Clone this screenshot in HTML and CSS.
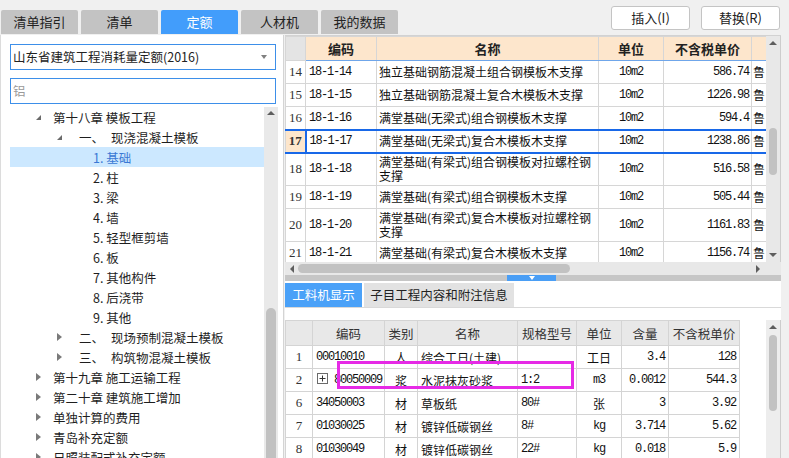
FILE: index.html
```html
<!DOCTYPE html>
<html lang="zh">
<head>
<meta charset="utf-8">
<link rel="stylesheet" href="styles.css">
</head>
<body>
<div class="app">
  <header class="topbar">
    <nav class="tabs">
      <div class="tab">清单指引</div>
      <div class="tab">清单</div>
      <div class="tab active">定额</div>
      <div class="tab">人材机</div>
      <div class="tab">我的数据</div>
    </nav>
    <div class="actions">
      <button class="btn">插入(I)</button>
      <button class="btn">替换(R)</button>
    </div>
  </header>

  <main class="main">
    <aside class="left">
      <div class="select"><span>山东省建筑工程消耗量定额(2016)</span><span class="caret"></span></div>
      <div class="search">铝</div>
      <div class="treewrap">
        <ul class="tree">
          <li class="l0"><span class="tw exp"></span>第十八章 模板工程</li>
          <li class="l1"><span class="tw exp"></span><span class="pre">一、</span>现浇混凝土模板</li>
          <li class="l2 sel">1. 基础</li>
          <li class="l2">2. 柱</li>
          <li class="l2">3. 梁</li>
          <li class="l2">4. 墙</li>
          <li class="l2">5. 轻型框剪墙</li>
          <li class="l2">6. 板</li>
          <li class="l2">7. 其他构件</li>
          <li class="l2">8. 后浇带</li>
          <li class="l2">9. 其他</li>
          <li class="l1"><span class="tw col"></span><span class="pre">二、</span>现场预制混凝土模板</li>
          <li class="l1"><span class="tw col"></span><span class="pre">三、</span>构筑物混凝土模板</li>
          <li class="l0"><span class="tw col"></span>第十九章 施工运输工程</li>
          <li class="l0"><span class="tw col"></span>第二十章 建筑施工增加</li>
          <li class="l0"><span class="tw col"></span>单独计算的费用</li>
          <li class="l0"><span class="tw col"></span>青岛补充定额</li>
          <li class="l0"><span class="tw col"></span>日照装配式补充定额</li>
        </ul>
        <div class="lscroll">
          <span class="arr up"></span>
          <span class="lthumb"></span>
        </div>
      </div>
    </aside>

    <section class="right">
      <div class="upper">
        <div class="upper-grid">
          <div class="tablebox">
            <table class="qt">
              <colgroup>
                <col style="width:20px"><col style="width:71px"><col style="width:222px"><col style="width:65px"><col style="width:88px"><col style="width:15px">
              </colgroup>
              <thead>
                <tr><th class="num"></th><th>编码</th><th>名称</th><th>单位</th><th>不含税单价</th><th></th></tr>
              </thead>
              <tbody>
                <tr><td class="num">14</td><td class="code mono">18-1-14</td><td class="name">独立基础钢筋混凝土组合钢模板木支撑</td><td class="unit mono">10m2</td><td class="price mono">586.74</td><td class="lu">鲁</td></tr>
                <tr><td class="num">15</td><td class="code mono">18-1-15</td><td class="name">独立基础钢筋混凝土复合木模板木支撑</td><td class="unit mono">10m2</td><td class="price mono">1226.98</td><td class="lu">鲁</td></tr>
                <tr><td class="num">16</td><td class="code mono">18-1-16</td><td class="name">满堂基础(无梁式)组合钢模板木支撑</td><td class="unit mono">10m2</td><td class="price mono">594.4</td><td class="lu">鲁</td></tr>
                <tr class="sel"><td class="num">17</td><td class="code mono">18-1-17</td><td class="name">满堂基础(无梁式)复合木模板木支撑</td><td class="unit mono">10m2</td><td class="price mono">1238.86</td><td class="lu">鲁</td></tr>
                <tr class="two"><td class="num">18</td><td class="code mono">18-1-18</td><td class="name">满堂基础(有梁式)组合钢模板对拉螺栓钢支撑</td><td class="unit mono">10m2</td><td class="price mono">516.58</td><td class="lu">鲁</td></tr>
                <tr><td class="num">19</td><td class="code mono">18-1-19</td><td class="name">满堂基础(有梁式)组合钢模板木支撑</td><td class="unit mono">10m2</td><td class="price mono">505.44</td><td class="lu">鲁</td></tr>
                <tr class="two"><td class="num">20</td><td class="code mono">18-1-20</td><td class="name">满堂基础(有梁式)复合木模板对拉螺栓钢支撑</td><td class="unit mono">10m2</td><td class="price mono">1161.83</td><td class="lu">鲁</td></tr>
                <tr><td class="num">21</td><td class="code mono">18-1-21</td><td class="name">满堂基础(有梁式)复合木模板木支撑</td><td class="unit mono">10m2</td><td class="price mono">1156.74</td><td class="lu">鲁</td></tr>
              </tbody>
            </table>
          </div>
          <div class="vscroll top-v">
            <span class="arr up"></span>
            <span class="vthumb"></span>
            <span class="fill"></span>
            <span class="arr down"></span>
          </div>
        </div>
        <div class="hscroll">
          <span class="harr left-a"></span>
          <span class="hthumb"></span>
          <span class="fill"></span>
          <span class="harr right-a"></span>
          <span class="corner"></span>
        </div>
      </div>

      <div class="splitter"><span class="handle"></span></div>

      <div class="lower">
        <div class="subtabs">
          <div class="stab active">工料机显示</div>
          <div class="stab wide">子目工程内容和附注信息</div>
        </div>
        <div class="lower-grid">
          <div class="tablebox2">
            <table class="gt">
              <colgroup>
                <col style="width:27px"><col style="width:72px"><col style="width:33px"><col style="width:100px"><col style="width:59px"><col style="width:45px"><col style="width:47px"><col style="width:71px">
              </colgroup>
              <thead>
                <tr><th></th><th>编码</th><th>类别</th><th>名称</th><th>规格型号</th><th>单位</th><th>含量</th><th>不含税单价</th></tr>
              </thead>
              <tbody>
                <tr><td class="num">1</td><td class="mono">00010010</td><td class="c">人</td><td>综合工日(土建)</td><td class="mono"></td><td class="c">工日</td><td class="r mono">3.4</td><td class="r mono">128</td></tr>
                <tr><td class="num">2</td><td class="mono"><svg class="plus" width="11" height="11" viewBox="0 0 11 11"><rect x="0.5" y="0.5" width="10" height="10" fill="#fff" stroke="#6b6b6b"/><path d="M2.5 5.5h6M5.5 2.5v6" stroke="#333" stroke-width="1"/></svg>80050009</td><td class="c">浆</td><td>水泥抹灰砂浆</td><td class="mono">1:2</td><td class="c mono">m3</td><td class="r mono">0.0012</td><td class="r mono">544.3</td></tr>
                <tr><td class="num">6</td><td class="mono">34050003</td><td class="c">材</td><td>草板纸</td><td class="mono">80#</td><td class="c">张</td><td class="r mono">3</td><td class="r mono">3.92</td></tr>
                <tr><td class="num">7</td><td class="mono">01030025</td><td class="c">材</td><td>镀锌低碳钢丝</td><td class="mono">8#</td><td class="c mono">kg</td><td class="r mono">3.714</td><td class="r mono">5.62</td></tr>
                <tr><td class="num">8</td><td class="mono">01030049</td><td class="c">材</td><td>镀锌低碳钢丝</td><td class="mono">22#</td><td class="c mono">kg</td><td class="r mono">0.018</td><td class="r mono">5.9</td></tr>
              </tbody>
            </table>
            <div class="mark"></div>
          </div>
          <div class="vscroll bottom-v">
            <span class="arr up"></span>
            <span class="vthumb2"></span>
          </div>
        </div>
      </div>
    </section>
  </main>
</div>
</body>
</html>
```

FILE: styles.css
```css
* { box-sizing: border-box; margin: 0; padding: 0; }
html, body { width: 789px; height: 458px; overflow: hidden; }
body {
  background: #f0f0f0;
  font-family: "Noto Sans CJK SC", "Noto Sans", sans-serif;
  font-size: 12px;
  color: #222;
}

/* top bar */
.topbar { height: 35px; display: flex; justify-content: space-between; }
.tabs { display: flex; gap: 3px; padding: 10px 0 0 1px; }
.tab {
  width: 77px; height: 24px; background: #c3c3c3;
  border-radius: 2px 2px 0 0;
  font-size: 13px; line-height: 24px; text-align: center; color: #222;
}
.tab.active { background: #429dfb; color: #fff; }
.actions { display: flex; gap: 11px; padding: 6px 9px 0 0; }
.btn {
  width: 79px; height: 24px; background: #fff;
  border: 1px solid #c4c4c4; border-radius: 3px;
  font: 13px/22px "Noto Sans CJK SC", sans-serif; color: #222;
}

/* layout */
.main { display: flex; height: 423px; }

/* left panel */
.left {
  width: 284px; margin-right: 1px; background: #fff;
  border-left: 1px solid #dcdcdc; border-right: 1px solid #d4d4d4;
  padding: 9px 0 0 9px;
  display: flex; flex-direction: column;
}
.select {
  width: 266px; height: 26px; border: 1px solid #3d8fe9;
  font-size: 12.5px; line-height: 24px; padding: 0 8px 0 2px;
  display: flex; justify-content: space-between; align-items: center;
}
.caret {
  width: 0; height: 0;
  border-left: 3.5px solid transparent; border-right: 3.5px solid transparent;
  border-top: 4px solid #808080;
}
.search {
  width: 266px; height: 26px; margin-top: 8px; border: 1px solid #3d8fe9;
  color: #9a9a9a; font-size: 12.5px; line-height: 24px; padding-left: 2px;
}
.treewrap { display: flex; margin-top: 3px; flex: 1; min-height: 0; }
.tree { list-style: none; width: 254px; overflow: hidden; }
.tree li {
  height: 20px; font-size: 12.5px; white-space: nowrap; color: #1e1e1e;
  display: flex; align-items: center;
}
.tree .l0 { padding-left: 26px; }
.tree .l1 { padding-left: 47px; }
.tree .l2 { padding-left: 83px; }
.tree .sel { background: #cce8ff; color: #3a78d4; }
.tw { display: flex; align-items: center; height: 20px; }
.l0 .tw { width: 17px; }
.l1 .tw { width: 22px; }
.pre { display: inline-block; width: 32px; }
.tw.exp::before {
  content: ""; width: 0; height: 0;
  border-left: 5px solid transparent; border-bottom: 5px solid #6a6a6a;
}
.tw.col::before {
  content: ""; width: 0; height: 0;
  border-top: 4px solid transparent; border-bottom: 4px solid transparent;
  border-left: 5px solid #7a7a7a;
}
.lscroll {
  width: 14px; background: #e9e9e9;
  display: flex; flex-direction: column; align-items: center;
}
.lthumb { width: 10px; flex: 1; margin-top: 189px; background: #c1c1c1; border-radius: 5px 5px 0 0; }

/* scroll arrows */
.arr { height: 12px; width: 100%; display: flex; align-items: center; justify-content: center; flex: none; }
.arr.up::before {
  content: ""; border-left: 4px solid transparent; border-right: 4px solid transparent;
  border-bottom: 4px solid #5e5e5e;
}
.arr.down::before {
  content: ""; border-left: 4px solid transparent; border-right: 4px solid transparent;
  border-top: 4px solid #5e5e5e;
}

/* right panel */
.right { width: 496px; display: flex; flex-direction: column; background: #fff; }
.upper { border-top: 1px solid #d2d2d2; }
.upper-grid { display: flex; height: 226px; }
.tablebox { width: 481px; overflow: hidden; }
.vscroll {
  width: 15px; background: #e8e8e8; border-right: 1px solid #cdcdcd;
  display: flex; flex-direction: column; align-items: center;
}
.top-v .arr { height: 14px; }
.vthumb { width: 8px; height: 47px; margin-top: 78px; background: #c2c2c2; border-radius: 4px; flex: none; }
.fill { flex: 1; }

.hscroll { display: flex; align-items: center; height: 13px; background: #e8e8e8; }
.harr { width: 13px; height: 13px; display: flex; align-items: center; justify-content: center; flex: none; }
.harr.left-a::before {
  content: ""; border-top: 4px solid transparent; border-bottom: 4px solid transparent;
  border-right: 4px solid #5e5e5e;
}
.harr.right-a::before {
  content: ""; border-top: 4px solid transparent; border-bottom: 4px solid transparent;
  border-left: 4px solid #5e5e5e;
}
.hthumb { width: 272px; height: 9px; background: #c2c2c2; border-radius: 5px; flex: none; }
.corner { width: 17px; height: 13px; background: #e8e8e8; flex: none; }

/* top grid */
.qt { width: 481px; table-layout: fixed; border-collapse: collapse; }
.qt th, .qt td {
  border: 1px solid #d6d6d6; padding: 0 3px;
  overflow: hidden; white-space: nowrap;
}
.qt thead tr { height: 24px; }
.qt th {
  background: #fde6cc; font-size: 13px; font-weight: bold; color: #222;
  text-align: center; border-bottom: 1px solid #6fa6ea;
}
.qt th.num { background: #e4e4e4; border-bottom-color: #d6d6d6; }
.qt tbody tr { height: 23px; }
.qt tbody tr.two { height: 33px; }
.qt td { font-size: 12px; line-height: 14px; color: #111; }
.qt td.name { white-space: normal; padding: 0 2px; }
.num {
  font-family: "Liberation Serif", serif; font-size: 13px !important;
  text-align: center; padding: 0 !important; color: #333 !important;
}
.mono { font-family: "Liberation Mono", monospace; letter-spacing: -1.2px; }
.qt .unit { text-align: center; }
.qt .price { text-align: right; padding-right: 2px; }
.qt .lu { padding: 0 1px; }
.qt tr.sel td { border-top: 2px solid #1868e8; border-bottom: 2px solid #1868e8; }
.qt tr.sel td.code { border-left: 2px solid #1868e8; }
.qt tr.sel td.lu { border-right: 2px solid #1868e8; }
.qt tr.sel td.num { background: #fde6cc; font-weight: bold; border-left-color: #d6d6d6; }

/* splitter */
.splitter { height: 6px; background: #c6c6c6; padding-left: 222px; display: flex; }
.handle {
  width: 49px; height: 6px; background: #4a9ef5;
  display: flex; justify-content: center; align-items: center;
}
.handle::after {
  content: ""; border-left: 3px solid transparent; border-right: 3px solid transparent;
  border-top: 4px solid #fff;
}

/* lower */
.lower { flex: 1; display: flex; flex-direction: column; min-height: 0; }
.subtabs { display: flex; gap: 2px; padding-top: 2px; height: 27px; border-bottom: 1px solid #d9d9d9; }
.stab {
  width: 77px; height: 24px; background: #e2e2e2;
  font-size: 12.5px; line-height: 24px; text-align: center; color: #222;
}
.stab.wide { width: 150px; }
.stab.active { background: #4aa1f8; color: #fff; }
.lower-grid { display: flex; flex: 1; margin-top: 12px; min-height: 0; }
.tablebox2 { width: 481px; position: relative; overflow: hidden; }
.gt { width: 454px; table-layout: fixed; border-collapse: collapse; border-top: 1px solid #cfcfcf; }
.gt th, .gt td {
  border: 1px solid #d4d4d4; padding: 0 3px;
  overflow: hidden; white-space: nowrap; font-size: 12px; color: #111;
}
.gt thead tr { height: 25px; }
.gt th { background: #e8e8e8; font-weight: normal; font-size: 12.5px; color: #333; text-align: center; }
.gt tbody tr { height: 23px; }
.gt .c { text-align: center; }
.gt .r { text-align: right; }
.plus { vertical-align: -1px; margin: 0 6px 0 1px; }
.mark {
  position: absolute; left: 52px; top: 41px; width: 237px; height: 28px;
  border: 3px solid #e62ae6;
}
.bottom-v { background: #ededed; }
.bottom-v .arr { height: 14px; }
.vthumb2 { width: 8px; height: 76px; margin-top: 1px; background: #c2c2c2; border-radius: 4px; }
```
